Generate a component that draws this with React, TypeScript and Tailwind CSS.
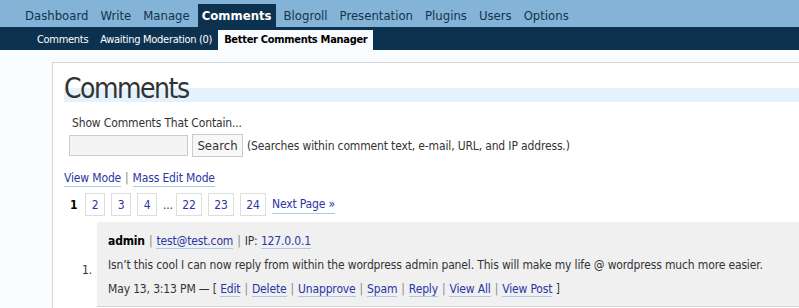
const topNav = ['Dashboard', 'Write', 'Manage', 'Comments', 'Blogroll', 'Presentation', 'Plugins', 'Users', 'Options'];
const subNav = ['Comments', 'Awaiting Moderation (0)', 'Better Comments Manager'];
const pages = ['2', '3', '4', null, '22', '23', '24'];
const actions = ['Edit', 'Delete', 'Unapprove', 'Spam', 'Reply', 'View All', 'View Post'];

function Link({ children }: { children: React.ReactNode }) {
  return <a className="text-[#2b35a3] border-b border-[#a9cbe9] cursor-pointer">{children}</a>;
}

function Sep() {
  return <span className="text-[#888] px-[4px]">|</span>;
}

export default function App() {
  return (
    <div className="w-[799px] h-[308px] overflow-hidden bg-[#f9fcfe] text-[#333] font-['DejaVu_Sans',sans-serif] [font-stretch:condensed] tracking-[-0.15px]">
      <div className="h-[27px] bg-[#83b4d8] flex items-end pl-[21px] gap-[4px] text-[13px] tracking-normal">
        {topNav.map((item) => (
          <span
            key={item}
            className={`h-[23px] px-[4px] flex items-center ${
              item === 'Comments' ? 'bg-[#0d324f] text-white font-bold' : 'text-[#14324c]'
            }`}
          >
            {item}
          </span>
        ))}
      </div>
      <div className="h-[23px] bg-[#0d324f] flex items-end pl-[31px] text-[11px] tracking-[-0.3px]">
        {subNav.map((item) => (
          <span
            key={item}
            className={`h-[20px] px-[6px] flex items-center ${
              item === 'Better Comments Manager' ? 'bg-[#f9fcfe] text-black font-bold' : 'text-white'
            }`}
          >
            {item}
          </span>
        ))}
      </div>
      <div className="pl-[52px] pt-[12px]">
        <div className="bg-white border-l border-t border-[#d6d6d6] h-[260px] pl-[11px] pt-[12px]">
          <h2 className="h-[27px] text-[28px] leading-[27px] text-[#333] tracking-[-1.5px] bg-[linear-gradient(to_bottom,transparent_13px,#e4f2fd_13px)]">
            Comments
          </h2>
          <div className="mt-[13px] pl-[8px] text-[12px] leading-[16px]">Show Comments That Contain...</div>
          <div className="flex items-center pl-[5px] mt-[3px] text-[12px]">
            <input className="w-[119px] h-[21px] border border-[#ccc] bg-[#f4f4f4]" />
            <button className="ml-[4px] w-[51px] h-[23px] border border-[#ccc] bg-[#f7f7f7] text-[13px] text-[#333] tracking-normal">
              Search
            </button>
            <span className="ml-[4px]">(Searches within comment text, e-mail, URL, and IP address.)</span>
          </div>
          <div className="mt-[13px] text-[12px] leading-[16px] flex">
            <Link>View Mode</Link>
            <Sep />
            <Link>Mass Edit Mode</Link>
          </div>
          <div className="mt-[6px] flex items-center gap-[6px] pl-[6px] text-[12px]">
            <span className="font-bold text-black mr-[2px] w-[7px]">1</span>
            {pages.map((p, i) =>
              p === null ? (
                <span key={i} className="w-[10px] -mr-[3px]">...</span>
              ) : (
                <span
                  key={i}
                  className={`h-[23px] ${p.length > 1 ? 'w-[26px]' : 'w-[20px]'} border border-[#ddd] flex items-center justify-center text-[#2b35a3]`}
                >
                  {p}
                </span>
              )
            )}
            <Link>Next Page »</Link>
          </div>
          <div className="mt-[6px] flex">
            <div className="w-[33px] pl-[18px] pt-[40px] text-[12px] leading-[16px]">1.</div>
            <div className="flex-1 bg-[#f0f0f0] border-b border-[#d4d4d4] h-[85px] pl-[11px] pt-[7px] text-[12px] leading-[24px]">
              <div>
                <b className="text-black">admin</b>
                <Sep />
                <Link>test@test.com</Link>
                <Sep />
                IP: <Link>127.0.0.1</Link>
              </div>
              <div className="whitespace-nowrap">
                Isn’t this cool I can now reply from within the wordpress admin panel. This will make my life @ wordpress much more easier.
              </div>
              <div>
                May 13, 3:13 PM — [{' '}
                {actions.map((a, i) => (
                  <span key={a}>
                    {i > 0 && <Sep />}
                    <Link>{a}</Link>
                  </span>
                ))}{' '}
                ]
              </div>
            </div>
          </div>
        </div>
      </div>
    </div>
  );
}
